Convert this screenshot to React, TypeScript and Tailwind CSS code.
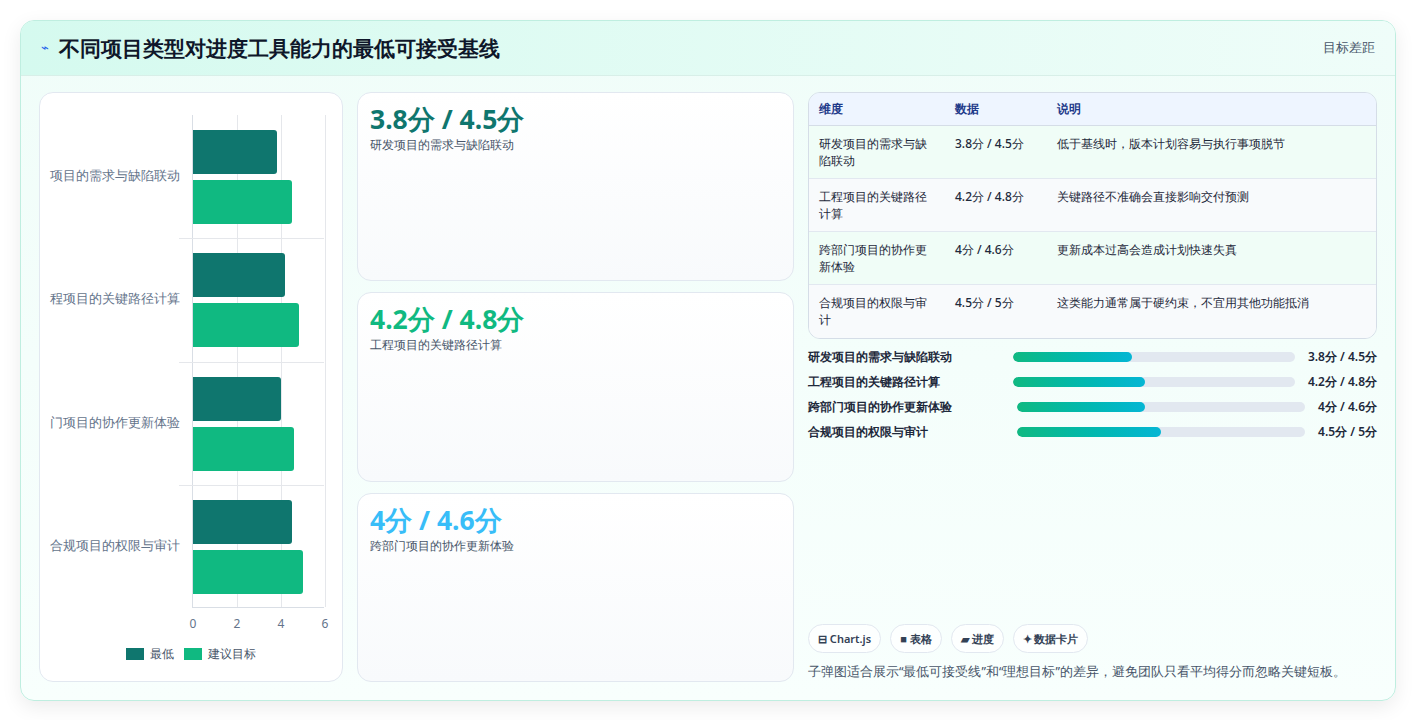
import React from "react";

const rows = [
  { name: "研发项目的需求与缺陷联动", short: "项目的需求与缺陷联动", min: 3.8, tgt: 4.5, v: "3.8分 / 4.5分", note: "低于基线时，版本计划容易与执行事项脱节", n1: "研发项目的需求与缺", n2: "陷联动" },
  { name: "工程项目的关键路径计算", short: "程项目的关键路径计算", min: 4.2, tgt: 4.8, v: "4.2分 / 4.8分", note: "关键路径不准确会直接影响交付预测", n1: "工程项目的关键路径", n2: "计算" },
  { name: "跨部门项目的协作更新体验", short: "门项目的协作更新体验", min: 4, tgt: 4.6, v: "4分 / 4.6分", note: "更新成本过高会造成计划快速失真", n1: "跨部门项目的协作更", n2: "新体验" },
  { name: "合规项目的权限与审计", short: "合规项目的权限与审计", min: 4.5, tgt: 5, v: "4.5分 / 5分", note: "这类能力通常属于硬约束，不宜用其他功能抵消", n1: "合规项目的权限与审", n2: "计" },
];

const cards = [
  { v: "3.8分 / 4.5分", l: "研发项目的需求与缺陷联动", c: "text-[#0f766e]" },
  { v: "4.2分 / 4.8分", l: "工程项目的关键路径计算", c: "text-[#10b981]" },
  { v: "4分 / 4.6分", l: "跨部门项目的协作更新体验", c: "text-[#38bdf8]" },
];

export default function App() {
  return (
    <div className="w-[1417px] h-[720px] bg-white p-[20px] pr-[20px] font-['Noto_Sans_CJK_SC','Noto_Sans',sans-serif]">
      <div className="w-[1376px] h-[681px] rounded-[14px] border border-[#bfeee0] bg-gradient-to-b from-[#f0fdf9] to-[#f8fffd] shadow-[0_6px_20px_rgba(0,0,0,0.08)] flex flex-col overflow-hidden">
        <div className="h-[55px] shrink-0 flex items-center justify-between px-[20px] bg-gradient-to-r from-[#d5faef] to-[#effdf9] border-b border-[#d8efe8]">
          <div className="flex items-center gap-[10px]">
            <span className="text-[13px] text-[#2563eb]">⌁</span>
            <span className="text-[20.5px] font-bold text-[#0f172a]">不同项目类型对进度工具能力的最低可接受基线</span>
          </div>
          <span className="text-[13px] text-[#475569]">目标差距</span>
        </div>
        <div className="flex-1 flex gap-[14px] px-[18px] pt-[16px] pb-[18px]">
          <div className="w-[304px] shrink-0 rounded-[14px] border border-[#e2e8f0] bg-white relative overflow-hidden">
            <div className="absolute left-[152px] top-[22px] w-[132px] h-[493px] border-l border-b border-[#d9dee5]">
              {[1, 2, 3].map((i) => (
                <div key={i} className="absolute top-0 bottom-0 w-px bg-[#e5e7eb]" style={{ left: i * 44 }} />
              ))}
              {[1, 2, 3].map((i) => (
                <div key={i} className="absolute left-[-14px] right-0 h-px bg-[#e5e7eb]" style={{ top: i * 123.25 }} />
              ))}
              {rows.map((r, i) => (
                <div key={i} className="absolute left-0" style={{ top: i * 123.25 + 15 }}>
                  <div className="h-[44px] bg-[#0f766e] rounded-r-[3px]" style={{ width: r.min * 22 }} />
                  <div className="h-[44px] mt-[6px] bg-[#10b981] rounded-r-[3px]" style={{ width: r.tgt * 22 }} />
                </div>
              ))}
              {[0, 2, 4, 6].map((t) => (
                <span key={t} className="absolute top-[500px] text-[12px] text-[#64748b] -translate-x-1/2" style={{ left: t * 22 }}>{t}</span>
              ))}
            </div>
            {rows.map((r, i) => (
              <div key={i} className="absolute right-[162px] text-[12.5px] text-[#64748b] whitespace-nowrap" style={{ top: i * 123.25 + 74 }}>{r.short}</div>
            ))}
            <div className="absolute top-[552px] left-0 right-0 flex justify-center gap-[10px] text-[12px] text-[#475569]">
              <span className="flex items-center gap-[6px]"><span className="w-[18px] h-[12px] bg-[#0f766e]" />最低</span>
              <span className="flex items-center gap-[6px]"><span className="w-[18px] h-[12px] bg-[#10b981]" />建议目标</span>
            </div>
          </div>
          <div className="w-[437px] shrink-0 flex flex-col gap-[11px]">
            {cards.map((c, i) => (
              <div key={i} className="flex-1 rounded-[14px] border border-[#e2e8f0] bg-gradient-to-b from-white to-[#f8fafc] px-[12px] pt-[10px]">
                <div className={`text-[26.5px] font-bold leading-[32px] ${c.c}`}>{c.v}</div>
                <div className="text-[12px] text-[#475569] mt-[1px]">{c.l}</div>
              </div>
            ))}
          </div>
          <div className="flex-1 flex flex-col">
            <div className="rounded-[12px] border border-[#d5dde7] overflow-hidden text-[12px]">
              <div className="flex h-[33px] items-center bg-[#eef5ff] text-[#1e3a8a] font-semibold border-b border-[#d5dde7]">
                <div className="w-[146px] pl-[10px]">维度</div>
                <div className="w-[102px]">数据</div>
                <div>说明</div>
              </div>
              {rows.map((r, i) => (
                <div key={i} className={`flex h-[53px] pt-[9px] text-[#1e293b] font-medium leading-[17px] ${i < 3 ? "border-b border-[#e2e8f0]" : ""} ${i % 2 ? "bg-[#f8fafc]" : "bg-[#f0fdf7]"}`}>
                  <div className="w-[146px] pl-[10px] pr-[8px]">{r.n1}<br />{r.n2}</div>
                  <div className="w-[102px]">{r.v}</div>
                  <div>{r.note}</div>
                </div>
              ))}
            </div>
            <div className="mt-[10px] flex flex-col gap-[9px] text-[12px] font-semibold text-[#1e293b]">
              {rows.map((r, i) => (
                <div key={i} className="flex items-center h-[16px]">
                  <div className={i < 2 ? "w-[205px]" : "w-[209px]"}>{r.name}</div>
                  <div className="flex-1 h-[10px] rounded-full bg-[#e2e8f0] overflow-hidden">
                    <div className="h-full rounded-full bg-gradient-to-r from-[#10b981] to-[#06b6d4]" style={{ width: `${(r.min / 9) * 100}%` }} />
                  </div>
                  <div className={`text-right ${i < 2 ? "w-[82px]" : "w-[72px]"}`}>{r.v}</div>
                </div>
              ))}
            </div>
            <div className="mt-auto flex gap-[9px] text-[11px] font-semibold text-[#334155]">
              {["⊟ Chart.js", "■ 表格", "▰ 进度", "✦ 数据卡片"].map((t) => (
                <span key={t} className="h-[29px] px-[9px] flex items-center rounded-full border border-[#e2e8f0] bg-white/70">{t}</span>
              ))}
            </div>
            <div className="mt-[10px] text-[12.5px] text-[#475569]">子弹图适合展示“最低可接受线”和“理想目标”的差异，避免团队只看平均得分而忽略关键短板。</div>
          </div>
        </div>
      </div>
    </div>
  );
}
